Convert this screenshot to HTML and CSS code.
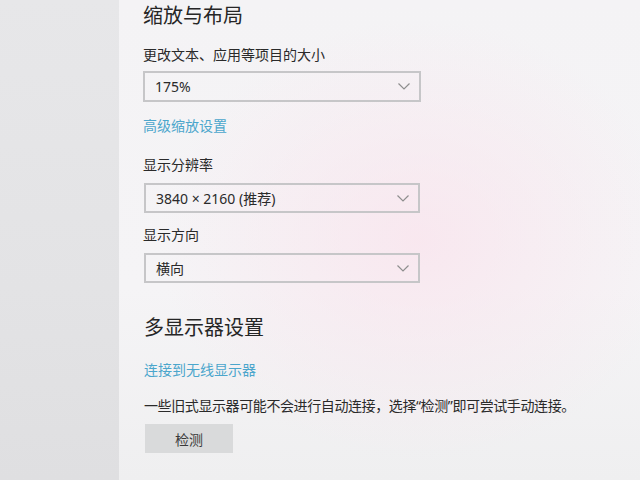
FILE: index.html
```html
<!DOCTYPE html>
<html lang="zh-CN">
  <head>
    <meta charset="UTF-8" />
    <meta name="viewport" content="width=device-width, initial-scale=1.0" />
    <title>显示设置</title>
    <link rel="stylesheet" href="styles.css">
  </head>
  <body>
    <div class="sidebar"></div>

    <div class="main">
      <h2 class="section-title">缩放与布局</h2>

      <div class="field">
        <div class="field-label">更改文本、应用等项目的大小</div>
        <div class="select">
          <span>175%</span>
          <svg class="chevron" width="12" height="7" viewBox="0 0 12 7"><path d="M0.5 0.5 L6 6 L11.5 0.5" fill="none" stroke="#8e8e8e" stroke-width="1.2"/></svg>
        </div>
      </div>

      <a class="link first-link" href="#">高级缩放设置</a>

      <div class="field">
        <div class="field-label">显示分辨率</div>
        <div class="select">
          <span>3840 × 2160 (推荐)</span>
          <svg class="chevron" width="12" height="7" viewBox="0 0 12 7"><path d="M0.5 0.5 L6 6 L11.5 0.5" fill="none" stroke="#8e8e8e" stroke-width="1.2"/></svg>
        </div>
      </div>

      <div class="field">
        <div class="field-label">显示方向</div>
        <div class="select">
          <span>横向</span>
          <svg class="chevron" width="12" height="7" viewBox="0 0 12 7"><path d="M0.5 0.5 L6 6 L11.5 0.5" fill="none" stroke="#8e8e8e" stroke-width="1.2"/></svg>
        </div>
      </div>

      <h2 class="section-title second">多显示器设置</h2>

      <a class="link" href="#">连接到无线显示器</a>

      <p class="note">一些旧式显示器可能不会进行自动连接，选择“检测”即可尝试手动连接。</p>

      <button type="button" class="detect">检测</button>
    </div>
  </body>
</html>
```

FILE: styles.css
```css
body {
  font-family: "Noto Sans", "Noto Sans CJK SC", sans-serif;
  margin: 0;
  padding: 0;
  height: 100vh;
  display: flex;
  overflow: hidden;
  color: #2a2a2a;
  background-color: #f3f2f4;
}
.sidebar {
  width: 119px;
  flex-shrink: 0;
  background: linear-gradient(180deg, #e7e7e9 0%, #e3e3e5 60%, #dfdfe1 100%);
}
.main {
  flex: 1;
  padding-top: 3px;
  padding-left: 24px;
  display: flex;
  flex-direction: column;
  align-items: flex-start;
  background:
    radial-gradient(ellipse 260px 220px at 300px 240px, rgba(250, 226, 236, 0.7), rgba(250, 226, 236, 0)),
    linear-gradient(180deg, #f4f3f5 0%, #f5f4f6 60%, #efeff0 100%);
}
.section-title {
  font-family: "Noto Sans CJK SC", sans-serif;
  font-size: 20px;
  font-weight: 400;
  line-height: 24px;
  margin: 0;
  color: #262626;
}
.section-title.second {
  margin-top: 32px;
  margin-left: 1px;
}
.field {
  display: flex;
  flex-direction: column;
  margin-top: 18px;
}
.field + .field {
  margin-top: 12px;
}
.field-label {
  font-size: 14px;
  line-height: 20px;
}
.select {
  width: 278px;
  height: 31px;
  box-sizing: border-box;
  border: 2px solid #c6c6c8;
  margin-top: 6px;
  padding: 0 9px 0 10px;
  display: flex;
  align-items: center;
  justify-content: space-between;
  font-size: 14px;
}
.first-link + .field .select,
.field + .field .select {
  width: 276px;
  height: 30px;
  margin-top: 8px;
  margin-left: 1px;
}
.chevron {
  display: block;
}
.link {
  font-size: 14px;
  line-height: 20px;
  color: #4ba6cc;
  text-decoration: none;
  margin-top: 21px;
  margin-left: 1px;
}
.first-link {
  margin-top: 14px;
  margin-left: 0;
  margin-bottom: 1px;
}
.note {
  font-size: 14px;
  line-height: 20px;
  margin: 16px 0 0 1px;
  letter-spacing: -0.4px;
}
.detect {
  width: 88px;
  height: 29px;
  margin-top: 8px;
  margin-left: 2px;
  border: none;
  background-color: #d9dadb;
  color: #3a3a3a;
  font-family: "Noto Sans CJK SC", sans-serif;
  font-size: 14px;
  padding: 0;
}
```
